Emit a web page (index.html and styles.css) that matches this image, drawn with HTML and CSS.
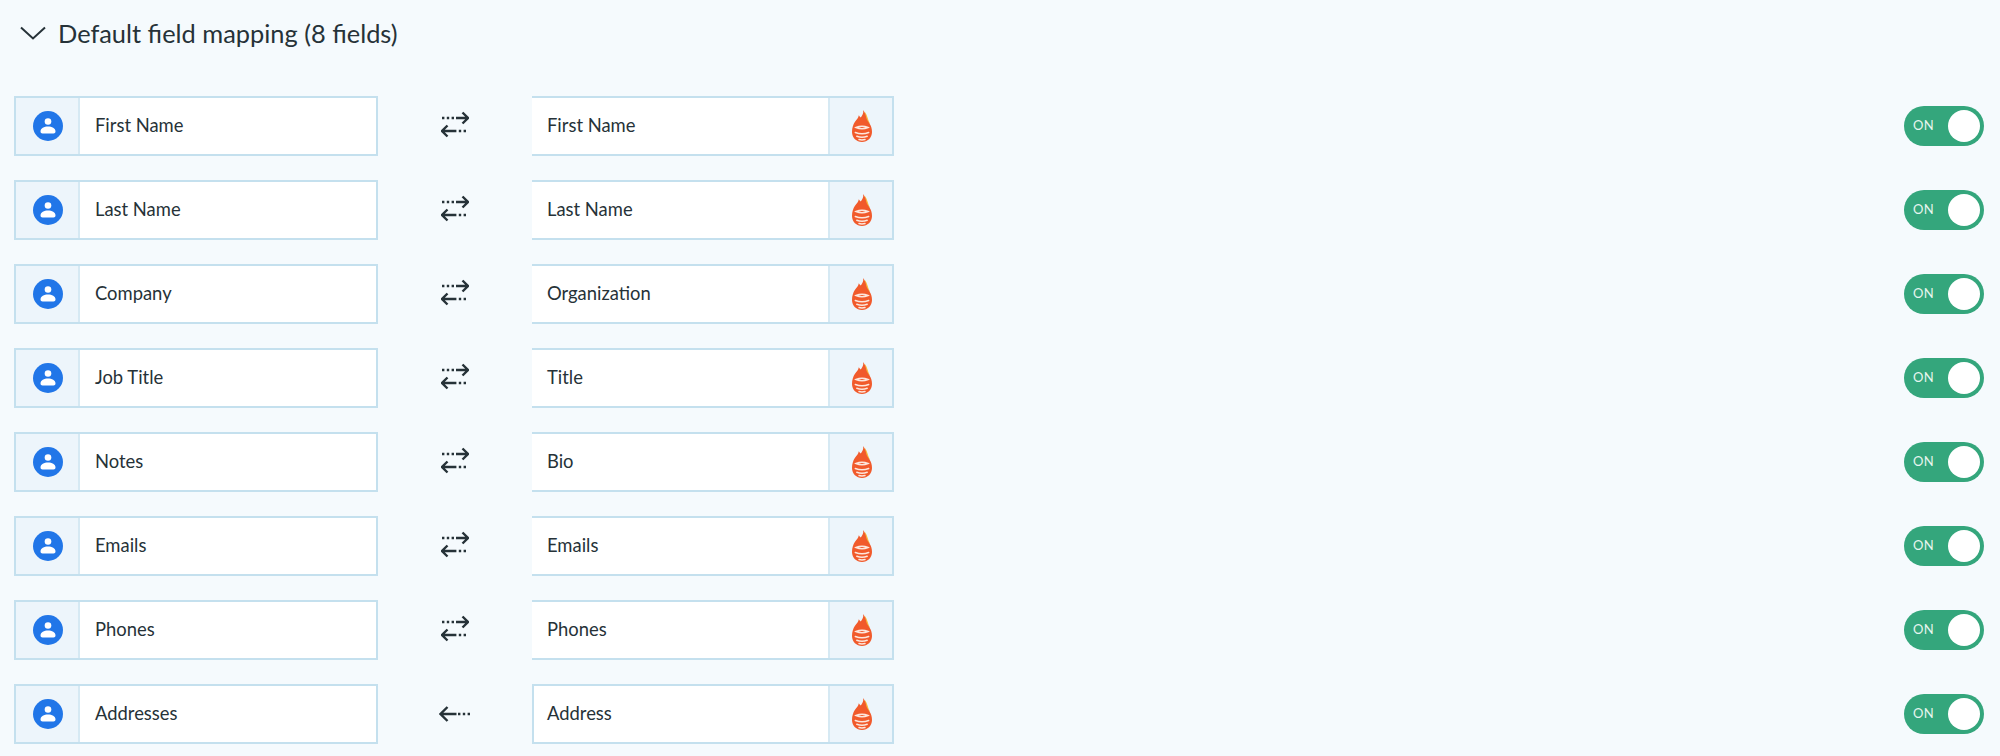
FILE: index.html
```html
<!DOCTYPE html>
<html lang="en">
<head>
<meta charset="utf-8">
<title>Default field mapping</title>
<link rel="stylesheet" href="styles.css">
</head>
<body>
<svg class="defs" width="0" height="0" aria-hidden="true">
  <symbol id="person" viewBox="0 0 30 30">
    <circle cx="15" cy="15" r="15" fill="#2176e8"/>
    <circle cx="15" cy="10.5" r="3.3" fill="#fff"/>
    <path d="M7.5 20.5c0-3.4 3.6-5 7.5-5s7.500 1.600 7.500 5c0 1.300-.8 2-2 2h-11c-1.200 0-2-.7-2-2z" fill="#fff"/>
  </symbol>
  <symbol id="flame" viewBox="0 0 20 32">
    <path d="M12.500 1.500c1.500 2 2.500 4 3.200 6.500.6 2.200 1.300 3.800 2.300 5.500L12 13z" fill="#f8b73a"/>
    <path d="M11 0c.9 3-.6 5.300-2.200 7.500C8 7 7.300 6.300 6.800 5.300 6.600 8 4.500 9.500 2.800 12 1.200 14.500 0 18 0 22c0 5.800 4.500 10 10 10s10-4.200 10-10c0-3.300-1-6.200-2.500-8.500-1.300-2-2.700-3.700-3.300-6.100C13.700 4.700 12.700 2.200 11 0z" fill="#f15a2b"/>
    <path d="M4 17.500c3.500-1.400 8.500-1.400 12 0-3.500 1.400-8.500 1.400-12 0z" fill="none" stroke="#fde6dc" stroke-width="1.400"/>
    <path d="M3.300 22.500c3.800 1.400 9.600 1.400 13.400 0M4.800 26.200c3 1.100 7.400 1.100 10.400 0M7 29.600c2 .5 4 .5 6 0" fill="none" stroke="#fde6dc" stroke-width="1.500" stroke-linecap="round"/>
  </symbol>
  <symbol id="both" viewBox="0 0 28 30">
    <path d="M1 7h14" fill="none" stroke="#263238" stroke-width="2.400" stroke-dasharray="2.400 2.400"/>
    <path d="M15 7h12M21.500 1.500 27 7l-5.500 5.500" fill="none" stroke="#263238" stroke-width="2.400"/>
    <path d="M13 20h14" fill="none" stroke="#263238" stroke-width="2.400" stroke-dasharray="2.400 2.400"/>
    <path d="M1 20h12M6.500 14.500 1 20l5.500 5.500" fill="none" stroke="#263238" stroke-width="2.400"/>
  </symbol>
  <symbol id="left" viewBox="0 0 32 18">
    <path d="M1.500 9h16M8.500 2 1.500 9l7 7" fill="none" stroke="#263238" stroke-width="2.400"/>
    <path d="M19 9h13" fill="none" stroke="#263238" stroke-width="2.400" stroke-dasharray="2.400 2.400"/>
  </symbol>
</svg>

<main class="panel">
  <header class="heading">
    <svg class="chevron" viewBox="0 0 26 14" aria-hidden="true"><path d="M1 1.500 13 12.500 25 1.500" fill="none" stroke="#263238" stroke-width="2"/></svg>
    <h2 class="title">Default field mapping (8 fields)</h2>
  </header>

  <section class="rows">
    <div class="row">
      <div class="field"><span class="cell cell-start"><svg class="ic-person"><use href="#person"/></svg></span><span class="label">First Name</span></div>
      <div class="sync"><svg class="ic-both"><use href="#both"/></svg></div>
      <div class="field field-target"><span class="label">First Name</span><span class="cell cell-end"><svg class="ic-flame"><use href="#flame"/></svg></span></div>
      <div class="toggle"><span class="toggle-text">ON</span><span class="knob"></span></div>
    </div>
    <div class="row">
      <div class="field"><span class="cell cell-start"><svg class="ic-person"><use href="#person"/></svg></span><span class="label">Last Name</span></div>
      <div class="sync"><svg class="ic-both"><use href="#both"/></svg></div>
      <div class="field field-target"><span class="label">Last Name</span><span class="cell cell-end"><svg class="ic-flame"><use href="#flame"/></svg></span></div>
      <div class="toggle"><span class="toggle-text">ON</span><span class="knob"></span></div>
    </div>
    <div class="row">
      <div class="field"><span class="cell cell-start"><svg class="ic-person"><use href="#person"/></svg></span><span class="label">Company</span></div>
      <div class="sync"><svg class="ic-both"><use href="#both"/></svg></div>
      <div class="field field-target"><span class="label">Organization</span><span class="cell cell-end"><svg class="ic-flame"><use href="#flame"/></svg></span></div>
      <div class="toggle"><span class="toggle-text">ON</span><span class="knob"></span></div>
    </div>
    <div class="row">
      <div class="field"><span class="cell cell-start"><svg class="ic-person"><use href="#person"/></svg></span><span class="label">Job Title</span></div>
      <div class="sync"><svg class="ic-both"><use href="#both"/></svg></div>
      <div class="field field-target"><span class="label">Title</span><span class="cell cell-end"><svg class="ic-flame"><use href="#flame"/></svg></span></div>
      <div class="toggle"><span class="toggle-text">ON</span><span class="knob"></span></div>
    </div>
    <div class="row">
      <div class="field"><span class="cell cell-start"><svg class="ic-person"><use href="#person"/></svg></span><span class="label">Notes</span></div>
      <div class="sync"><svg class="ic-both"><use href="#both"/></svg></div>
      <div class="field field-target"><span class="label">Bio</span><span class="cell cell-end"><svg class="ic-flame"><use href="#flame"/></svg></span></div>
      <div class="toggle"><span class="toggle-text">ON</span><span class="knob"></span></div>
    </div>
    <div class="row">
      <div class="field"><span class="cell cell-start"><svg class="ic-person"><use href="#person"/></svg></span><span class="label">Emails</span></div>
      <div class="sync"><svg class="ic-both"><use href="#both"/></svg></div>
      <div class="field field-target"><span class="label">Emails</span><span class="cell cell-end"><svg class="ic-flame"><use href="#flame"/></svg></span></div>
      <div class="toggle"><span class="toggle-text">ON</span><span class="knob"></span></div>
    </div>
    <div class="row">
      <div class="field"><span class="cell cell-start"><svg class="ic-person"><use href="#person"/></svg></span><span class="label">Phones</span></div>
      <div class="sync"><svg class="ic-both"><use href="#both"/></svg></div>
      <div class="field field-target"><span class="label">Phones</span><span class="cell cell-end"><svg class="ic-flame"><use href="#flame"/></svg></span></div>
      <div class="toggle"><span class="toggle-text">ON</span><span class="knob"></span></div>
    </div>
    <div class="row">
      <div class="field"><span class="cell cell-start"><svg class="ic-person"><use href="#person"/></svg></span><span class="label">Addresses</span></div>
      <div class="sync"><svg class="ic-left"><use href="#left"/></svg></div>
      <div class="field field-target field-closed"><span class="label">Address</span><span class="cell cell-end"><svg class="ic-flame"><use href="#flame"/></svg></span></div>
      <div class="toggle"><span class="toggle-text">ON</span><span class="knob"></span></div>
    </div>
  </section>
</main>
</body>
</html>
```
FILE: styles.css
```css
* { box-sizing: border-box; }

html, body {
  margin: 0;
  height: 100%;
  overflow: hidden;
}

body {
  background: #f5fafd;
  color: #263238;
  font-family: Lato, "Liberation Sans", sans-serif;
}

.defs { display: block; height: 0; }

.panel { padding: 15px 16px 0 14px; }

.heading {
  display: flex;
  align-items: center;
  height: 36px;
  padding-left: 6px;
  gap: 12px;
}

.chevron { width: 26px; height: 14px; flex: none; }

.title {
  margin: 0;
  font-size: 25.4px;
  font-weight: 400;
  line-height: 36px;
}

.rows {
  display: flex;
  flex-direction: column;
  gap: 24px;
  margin-top: 45px;
}

.row {
  display: flex;
  align-items: center;
  height: 60px;
}

.field {
  display: flex;
  align-items: stretch;
  width: 364px;
  height: 60px;
  background: #fff;
  border: 2px solid #c4e0ee;
  font-size: 18.4px;
}

.field-target {
  width: 362px;
  border-left: 0;
}

.field-closed { border-left: 2px solid #c4e0ee; }

.cell {
  display: flex;
  align-items: center;
  justify-content: center;
  flex: none;
  background: #edf5fb;
}

.cell-start { width: 64px; padding-left: 2px; border-right: 2px solid #d6e9f3; }
.cell-end { width: 64px; padding-left: 2px; border-left: 2px solid #d6e9f3; }

.label {
  flex: 1;
  align-self: center;
  padding: 0 0 2px 15px;
  line-height: 24px;
}

.field-closed .label { padding-left: 13px; }

.sync {
  display: flex;
  align-items: center;
  justify-content: center;
  flex: none;
  width: 154px;
}

.ic-person { width: 30px; height: 30px; }
.ic-flame { width: 20px; height: 32px; }
.ic-both { width: 28px; height: 30px; }
.ic-left { width: 32px; height: 18px; }

.toggle {
  display: flex;
  align-items: center;
  justify-content: space-between;
  flex: none;
  width: 80px;
  height: 40px;
  margin-left: auto;
  padding: 0 4px 0 9px;
  border-radius: 20px;
  background: #34a67c;
}

.toggle-text {
  padding-bottom: 2px;
  color: #e6f5ef;
  font-size: 13px;
  letter-spacing: 0.4px;
}

.knob {
  width: 32px;
  height: 32px;
  border-radius: 50%;
  background: #fff;
}
```
